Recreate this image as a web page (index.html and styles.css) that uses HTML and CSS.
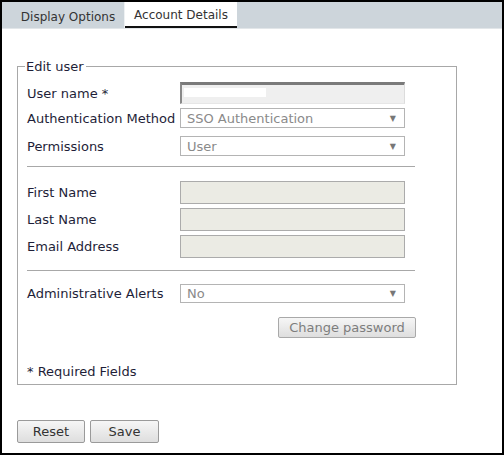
FILE: index.html
```html
<!DOCTYPE html>
<html>
<head>
<meta charset="utf-8">
<link rel="stylesheet" href="styles.css">
</head>
<body>
<div class="frame">
  <div class="tabbar">
    <div class="tab">Display Options</div>
    <div class="tab active">Account Details</div>
  </div>
  <div class="content">
    <fieldset class="box">
      <legend>Edit user</legend>
      <div class="row r-user">
        <label class="lbl">User name *</label>
        <div class="field inset"><span class="redact"></span></div>
      </div>
      <div class="row r-auth">
        <label class="lbl">Authentication Method</label>
        <div class="field select"><span>SSO Authentication</span><span class="arrow">▼</span></div>
      </div>
      <div class="row r-perm">
        <label class="lbl">Permissions</label>
        <div class="field select"><span>User</span><span class="arrow">▼</span></div>
      </div>
      <div class="rule rule1"></div>
      <div class="row r-text">
        <label class="lbl">First Name</label>
        <div class="field text"></div>
      </div>
      <div class="row r-text">
        <label class="lbl">Last Name</label>
        <div class="field text"></div>
      </div>
      <div class="row r-text r-last">
        <label class="lbl">Email Address</label>
        <div class="field text"></div>
      </div>
      <div class="rule rule2"></div>
      <div class="row r-alert">
        <label class="lbl">Administrative Alerts</label>
        <div class="field select"><span>No</span><span class="arrow">▼</span></div>
      </div>
      <div class="pwrow">
        <button class="btn pw">Change password</button>
      </div>
      <div class="req">* Required Fields</div>
    </fieldset>
    <div class="actions">
      <button class="btn act reset">Reset</button>
      <button class="btn act save">Save</button>
    </div>
  </div>
</div>
</body>
</html>
```
FILE: styles.css
```css
html, body {
  margin: 0;
  padding: 0;
  background: #fff;
}
.frame {
  width: 504px;
  height: 455px;
  box-sizing: border-box;
  border: 2px solid #000;
  font-family: "DejaVu Sans", Verdana, sans-serif;
  font-size: 13px;
  color: #1e1e38;
  overflow: hidden;
}
.tabbar {
  height: 26px;
  background: #cdd5db;
  display: flex;
  align-items: stretch;
  border-bottom: 1px solid #e2e6e9;
}
.tab {
  font-size: 12px;
  color: #333;
  display: flex;
  align-items: center;
  justify-content: center;
  box-sizing: border-box;
}
.tab:first-child {
  width: 123px;
  padding-left: 10px;
  padding-top: 4px;
  border-right: 1px solid #eef1f3;
}
.tab.active {
  width: 112px;
  background: #fff;
  border-bottom: 2px solid #111;
  padding-top: 1px;
}
.content {
  padding: 30px 0 0 15px;
}
.box {
  width: 440px;
  box-sizing: border-box;
  margin: 0;
  border: 1px solid #a8a8a8;
  padding: 8px 41px 4px 9px;
}
.box legend {
  padding: 0 2px 0 1px;
  margin-left: -2px;
  line-height: 15px;
  color: #1e1e38;
}
.row {
  display: flex;
  align-items: center;
}
.lbl {
  width: 153px;
  flex: none;
}
.field {
  width: 225px;
  box-sizing: border-box;
  flex: none;
}
.r-user { height: 22px; margin-bottom: 4px; }
.r-auth { height: 20px; margin-bottom: 8px; }
.r-perm { height: 20px; }
.inset {
  height: 22px;
  background: #efefef;
  border-top: 3px solid #7a7a7a;
  border-left: 2px solid #8a8a8a;
  border-right: 1px solid #dcdcdc;
  border-bottom: 1px solid #e6e6e6;
  padding: 2px 0 0 2px;
}
.redact {
  display: block;
  width: 82px;
  height: 9px;
  background: #fff;
  margin-top: 1px;
}
.select {
  height: 20px;
  background: #fff;
  border: 1px solid #b4b4b4;
  color: #8a8a8a;
  display: flex;
  align-items: center;
  justify-content: space-between;
  padding: 0 8px 0 6px;
}
.arrow {
  font-size: 8px;
  color: #777;
}
.rule {
  height: 0;
  border-top: 1px solid #a8a8a8;
}
.rule1 { margin: 10px 0 14px; }
.rule2 { margin: 12px 0 13px; }
.r-text {
  height: 23px;
  margin-bottom: 4px;
}
.r-text.r-last { margin-bottom: 0; }
.text {
  height: 23px;
  background: #ebebe4;
  border: 1px solid #ababab;
}
.r-alert { height: 19px; }
.r-alert .select { height: 19px; }
.btn {
  font-family: "DejaVu Sans", Verdana, sans-serif;
  font-size: 13px;
  background: linear-gradient(#f6f6f6, #dedede);
  border: 1px solid #a9a9a9;
  border-radius: 2px;
  padding: 0;
  box-sizing: border-box;
}
.pwrow {
  display: flex;
  justify-content: flex-end;
  margin: 14px -1px 0 0;
}
.pw {
  width: 138px;
  height: 21px;
  color: #7d7d7d;
}
.req {
  margin-top: 26px;
  line-height: 16px;
}
.actions {
  display: flex;
  gap: 5px;
  margin-top: 35px;
}
.act {
  height: 23px;
  color: #333;
  border-color: #9a9a9a;
}
.reset { width: 68px; }
.save { width: 69px; }
```
